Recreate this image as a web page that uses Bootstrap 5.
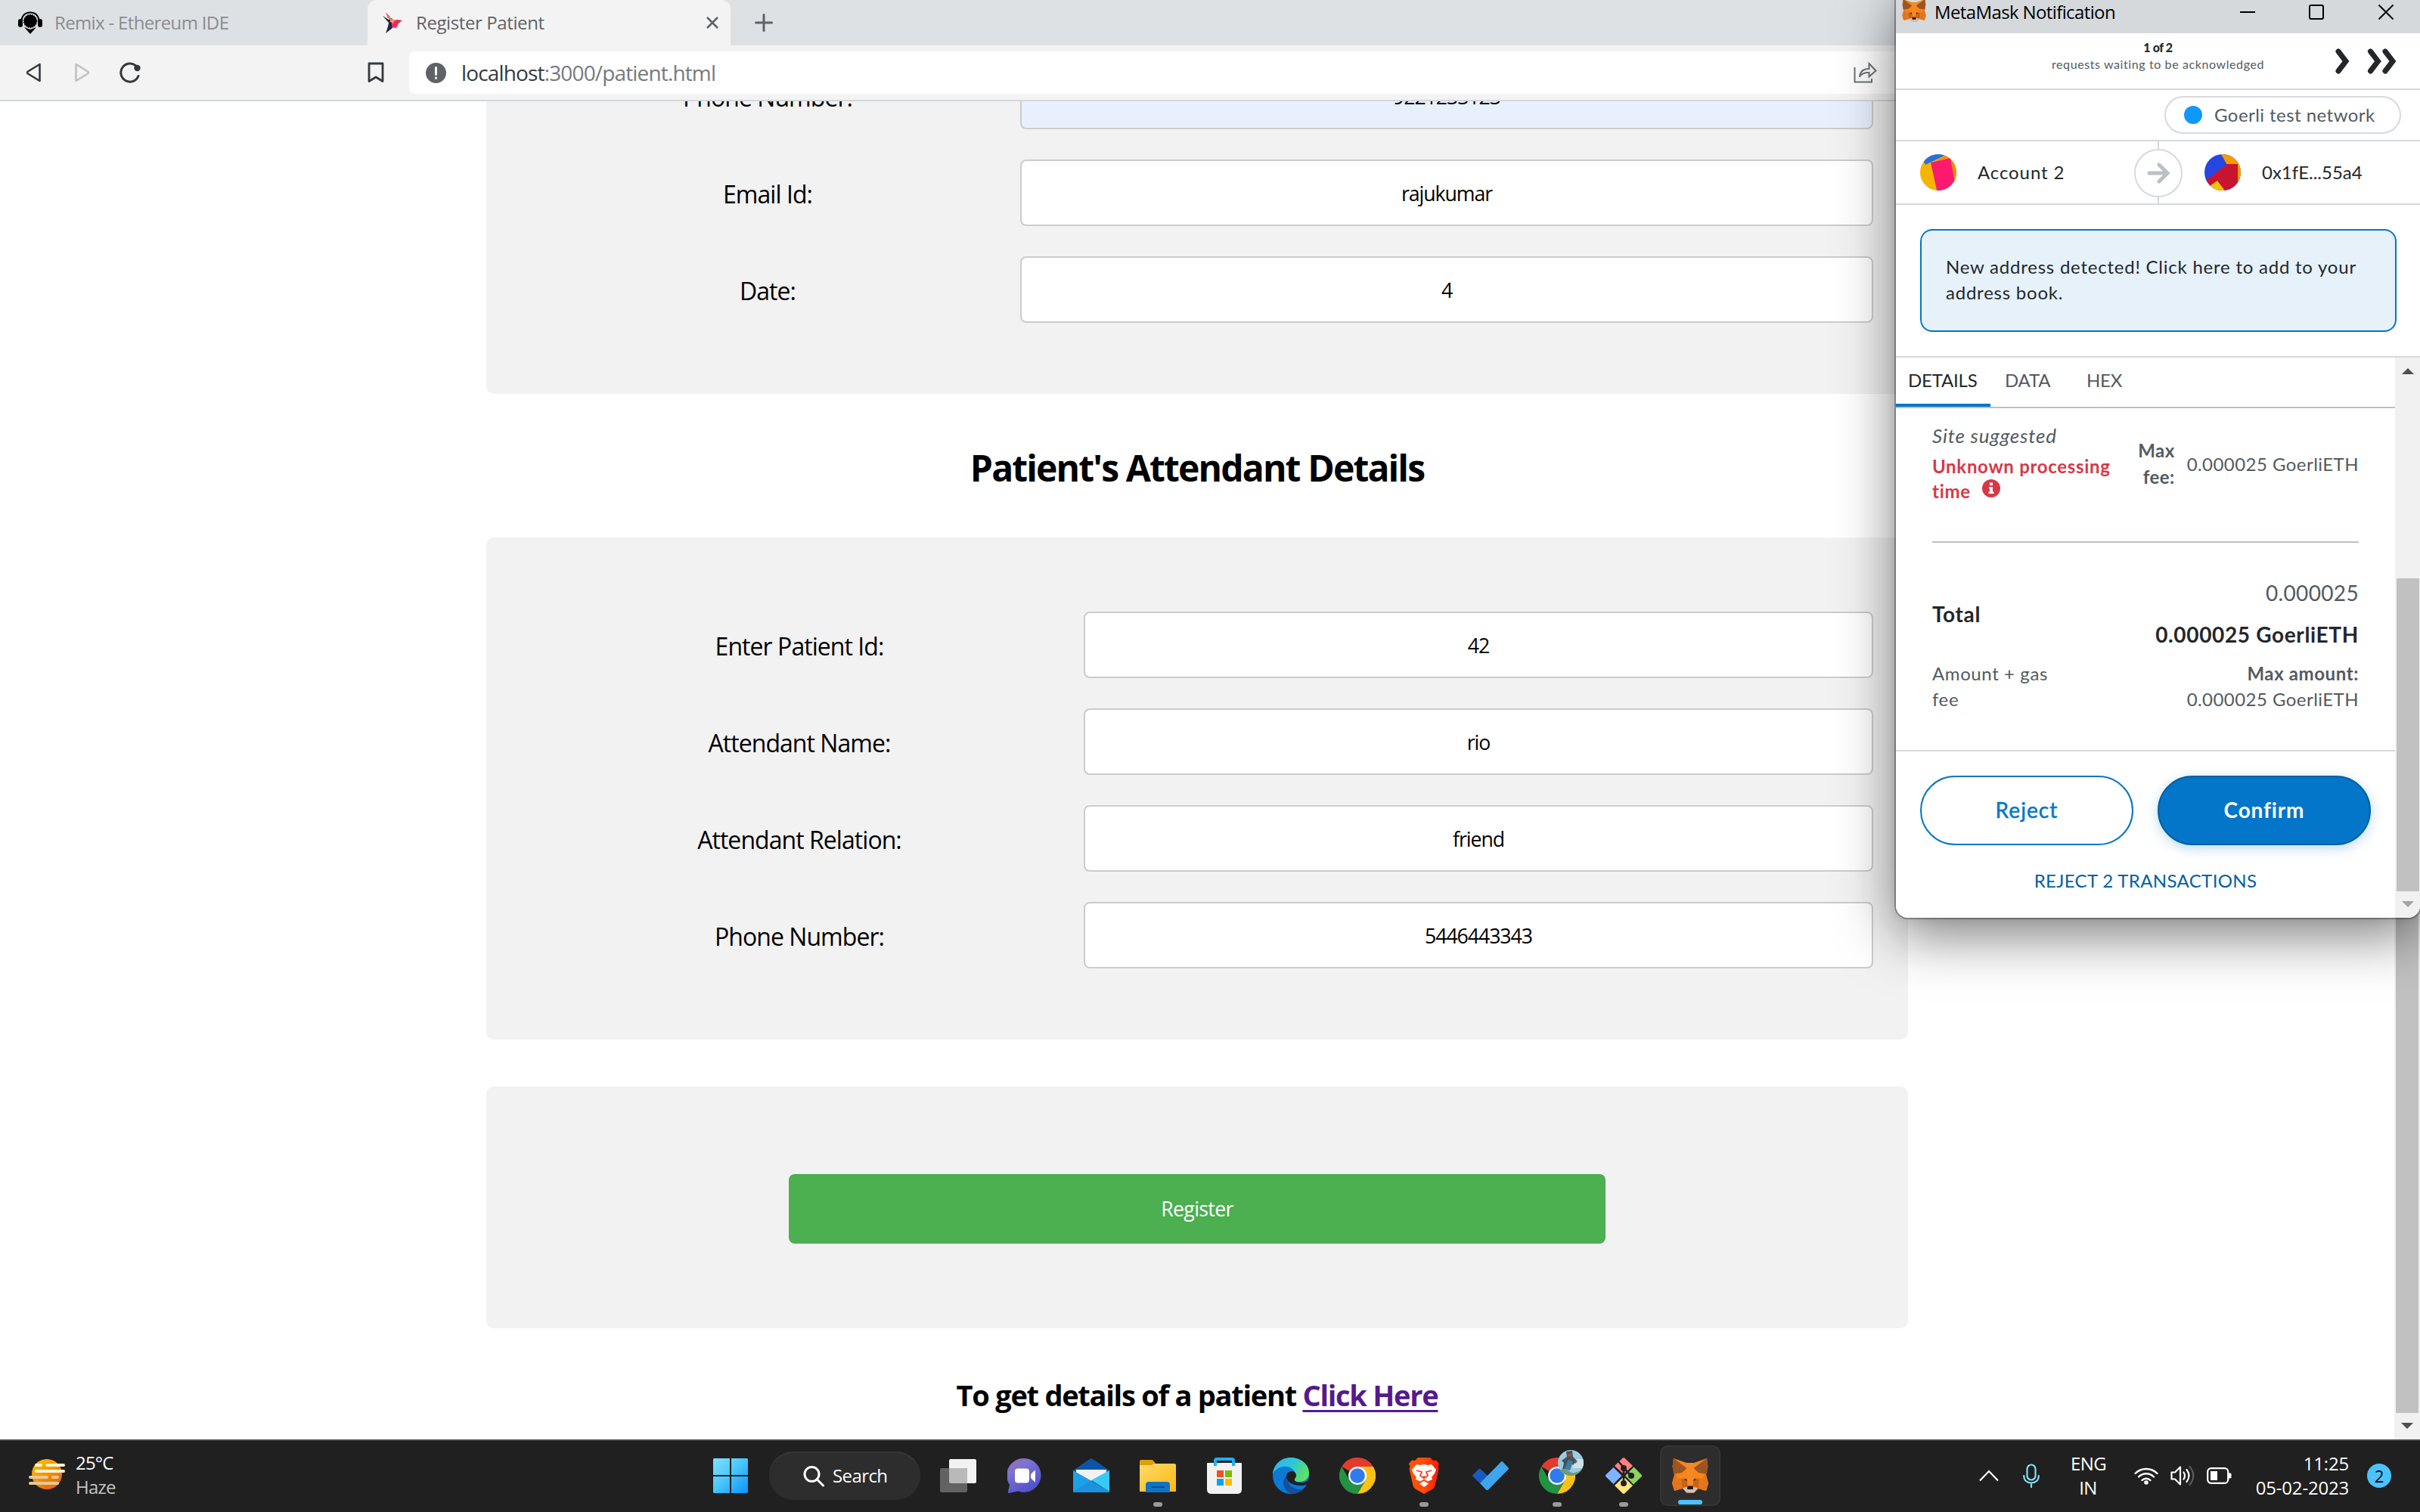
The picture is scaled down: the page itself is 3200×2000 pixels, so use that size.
<!DOCTYPE html>
<html lang="en">
<head>
<meta charset="utf-8">
<title>Register Patient</title>
<link href="https://cdn.jsdelivr.net/npm/bootstrap@5.3.0/dist/css/bootstrap.min.css" rel="stylesheet">
<script src="https://cdn.jsdelivr.net/npm/bootstrap@5.3.0/dist/js/bootstrap.bundle.min.js"></script>
<style>
  body { margin: 0; background: #fff; color: #000; font-family: "Open Sans", "Noto Sans", sans-serif; font-size: 24px; line-height: 32px; }
  svg { display: block; flex: none; }
  .desktop { width: 3200px; height: 2000px; }

  /* browser chrome */
  .tabstrip { height: 60px; background: #dde1e4; flex: none; }
  .tab-idle { width: 486px; padding-left: 24px; gap: 16px; color: #8a8d91; letter-spacing: -.65px; }
  .tab-live { width: 480px; padding: 0 16px 0 20px; background: #f3f3f3; color: #5f6368; border-radius: 12px 12px 0 0; letter-spacing: -.4px; }
  .tab-live .tab-name { margin-left: 18px; }
  .tab-plus { margin-left: 32px; }
  .toolbar { height: 74px; background: #f3f3f3; border-bottom: 2px solid #d3d8dc; flex: none; padding-left: 34px; }
  .bar-forward { margin-left: 43px; }
  .bar-reload { margin-left: 39px; }
  .bar-save { margin-left: 299px; }
  .address { height: 56px; width: 1990px; margin-left: 33px; padding: 0 48px 0 22px; background: #fff; border-radius: 8px; font-size: 28px; letter-spacing: -.85px; color: #767a7e; }
  .address b { font-weight: 400; color: #35393d; }

  /* patient page */
  .page { width: 1880px; margin-left: 643px; flex: none; }
  .panel { background: #f2f2f2; border-radius: 10px; padding: 0 46px 0 38px; }
  .panel-first { margin-top: -51px; height: 438px; }
  .panel-second { margin-top: 60px; height: 664px; padding-top: 98px; }
  .panel-third { margin-top: 62px; height: 320px; padding: 4px 0 0; }
  .field { height: 88px; margin-bottom: 40px; font-size: 32px; letter-spacing: -.95px; }
  .field label { width: 668px; padding-top: 3px; text-align: center; }
  .panel-second .field label { width: 752px; }
  .field input { flex: 1; min-width: 0; height: 88px; border: 2px solid #ccc; border-radius: 8px; background: #fff; text-align: center; font-size: 26.67px; letter-spacing: -1.05px; color: #000; padding: 0; }
  .field input.autofilled { background: #e8f0fe; }
  .section-title { font-size: 48px; line-height: 64px; font-weight: 700; letter-spacing: -1.85px; margin: 66px 0 0; text-align: center; }
  .register { width: 1080px; height: 92px; background: #4caf50; color: #fff; border: 0; border-radius: 8px; font-size: 26.67px; letter-spacing: -.65px; }
  .lookup { font-size: 38px; line-height: 50px; font-weight: 700; letter-spacing: -1.27px; margin: 63px 0 0; text-align: center; }
  .lookup a { color: #551a8b; text-decoration-thickness: 3px; text-underline-offset: 5px; }

  /* scrollbars */
  .rail { width: 34px; background: #f1f1f1; flex: none; }
  .rail .thumb { width: 30px; background: #c1c1c1; margin: 0 auto; }
  .page-thumb { height: 1100px; }
  .page-down { margin: 13px 0 14px; }

  /* wallet window */
  .wallet, .wallet-shade { left: 2507px; top: -16px; width: 693px; height: 1230px; border-radius: 16px; }
  .wallet { padding-top: 16px; background: #fff; overflow: hidden; font-family: Lato, "Open Sans", sans-serif; color: #24272a; letter-spacing: .6px; z-index: 2; }
  .wallet .rail { width: 33px; }
  .wallet-shade { box-shadow: 0 0 0 2px rgba(0,0,0,.28), 0 22px 74px rgba(0,0,0,.52), 0 0 12px rgba(0,0,0,.12); z-index: 1; }
  .w-title { margin-top: -16px; padding: 16px 0 0 8px; height: 60px; background: #d5d9dc; color: #000; font-family: "Open Sans", sans-serif; letter-spacing: -.62px; }
  .w-title .cap { height: 32px; margin-bottom: 12px; }
  .w-title .cap-name { margin-left: 11px; }
  .w-title .cap-fox { margin-bottom: 4px; }
  .w-title .cap-max { margin-left: 71px; }
  .w-title .cap-close { margin: 0 35px 0 72px; }
  .line-b { border-bottom: 2px solid #d6d9dc; }
  .w-queue { height: 75px; font-size: 16px; line-height: 22px; }
  .w-queue .words { padding-bottom: 13px; }
  .w-queue .note { letter-spacing: .6px; color: #535a61; }
  .w-queue .count { letter-spacing: -.4px; font-weight: 900; }
  .w-queue .side { width: 113px; }
  .w-net { height: 68px; padding-right: 25px; }
  .net-pill { width: 313px; height: 50px; border: 2px solid #d6d9dc; border-radius: 25px; color: #535a61; padding-left: 24px; gap: 16px; letter-spacing: .45px; }
  .net-dot { width: 24px; height: 24px; border-radius: 50%; background: #1098fc; }
  .w-parties { height: 84px; padding-left: 32px; }
  .w-parties .from { width: 283px; gap: 28px; letter-spacing: .9px; }
  .w-parties .to { margin-left: 29px; gap: 28px; letter-spacing: 0; }
  .w-parties .mid { width: 64px; height: 82px; }
  .w-notice { height: 202px; padding: 32px 31px 0 32px; }
  .notice-box { height: 136px; border: 2px solid #0376c9; border-radius: 16px; background: #e6f1f9; padding: 31px 20px 0 32px; line-height: 33.6px; letter-spacing: .77px; }
  .w-tabs { height: 67px; border-bottom: 2px solid #bbc0c5; color: #535a61; letter-spacing: -.2px; }
  .w-tabs span { height: 67px; padding: 14px 0 0 19px; width: 108px; }
  .w-tabs .on { width: 125px; padding-left: 16px; color: #24272a; border-bottom: 4px solid #0376c9; height: 65px; }
  .w-body { padding: 0 48px; color: #535a61; height: 452px; }
  .fee-row { height: 178px; border-bottom: 2px solid #bbc0c5; padding-top: 20px; }
  .site { font-style: italic; font-size: 26px; letter-spacing: .8px; }
  .warn { color: #d73847; font-weight: 700; line-height: 33px; margin-top: 8px; letter-spacing: .7px; }
  .warn svg { margin: 1px 0 0 15px; }
  .max-fee { height: 70px; margin-top: 18px; gap: 16px; line-height: 35px; letter-spacing: .45px; }
  .total-row { padding-top: 46px; }
  .total-name { margin-top: 28px; }
  .total-eth { margin-top: 15px; }
  .gas-row { margin-top: 15px; line-height: 34px; }
  .gas-row span { letter-spacing: .45px; }
  .big { font-size: 28px; line-height: 40px; letter-spacing: .35px; }
  .ink { color: #24272a; font-weight: 700; letter-spacing: .65px; }
  .w-foot { border-top: 2px solid #d6d9dc; padding: 32px 32px 0; }
  .pill { height: 92px; width: 282px; border-radius: 46px; font-size: 28px; border: 2px solid #0376c9; padding-bottom: 4px; }
  .pill-line { color: #0376c9; background: #fff; letter-spacing: 1.1px; -webkit-text-stroke: .5px #0376c9; }
  .pill-fill { color: #fff; background: #0376c9; border-color: #0260a4; font-weight: 700; letter-spacing: .85px; box-shadow: 0 4px 16px rgba(3,118,201,.28); }
  .reject-all { color: #0260a4; text-align: center; margin-top: 31px; letter-spacing: .35px; }
  .w-up { margin-top: 14px; }
  .w-thumb { margin-top: 270px !important; height: 414px; }
  .w-down { margin-top: 13px; }

  /* taskbar */
  .taskbar { height: 96px; background: #202020; box-shadow: inset 0 2px #444; color: #fff; flex: none; }
  .weather { width: 926px; padding-left: 37px; gap: 13px; letter-spacing: -.8px; }
  .weather .now { padding-bottom: 2px; }
  .weather .sky { color: #c3c3c3; }
  .tile { width: 80px; height: 80px; border-radius: 10px; margin-right: 8px; flex: none; }
  .tile.front { background: #2d2d2d; border: 2px solid #343434; }
  .tile .run { bottom: -1px; left: 50%; width: 12px; height: 6px; border-radius: 3px; background: #9a9a9a; transform: translateX(-50%); }
  .tile .run.active { width: 32px; background: #4cc2ff; bottom: 0; }
  .tile .face { left: 41px; top: 6px; }
  .search-pill { width: 200px; height: 64px; border-radius: 32px; background: #2d2d2d; box-shadow: inset 0 2px #363636; margin: 0 10px 0 3px; gap: 10px; padding-left: 45px; letter-spacing: -.6px; }
  .tray { margin-left: 342px; }
  .tray .mic { margin-left: 32px; }
  .lang { width: 46px; margin: 0 38px 0 41px; text-align: center; letter-spacing: -.6px; padding-bottom: 1px; }
  .clock { width: 125px; margin: 0 24px 0 30px; text-align: right; letter-spacing: -.2px; padding-bottom: 1px; }
  .alerts { width: 32px; height: 32px; border-radius: 50%; background: #4cc2ff; color: #000; font-size: 22px; text-align: center; }
</style>
</head>
<body>
<svg width="0" height="0" class="position-absolute">
  <defs>
    <symbol id="fox" viewBox="0 0 48 46">
      <path fill="#f6851b" d="M2 0 19 6h10L46 0l1.500 11-3 9 3.500 13-3 10-10-3-6 5.500h-9L13.500 40 3 43 0 33l3.500-13L.500 11z"/>
      <path fill="#e2761b" d="M3.500 20 0 33h13l6-8zM44.500 20 48 33H35l-6-8z"/>
      <path fill="#f6851b" d="M3.500 20 19 14v12L8 27zM44.500 20 29 14v12l11 1z"/>
      <path fill="#e4751f" d="M0 33h13l.5 7L3 43zM48 33H35l-.5 7L45 43z"/>
      <path fill="#f58a25" d="m19 6 10 0-2 32h-6z"/>
      <path fill="#9c5423" d="M2 0 19.500 13 13 19 2 21 .500 11zM46 0 28.500 13 35 19l11 2 1.500-10z"/>
      <path fill="#cd6116" d="m12 27 8 4 .5 6-7 3zM36 27l-8 4-.5 6 7 3z"/>
      <path fill="#233447" d="m15 28 4-1 1 3.500zM33 28l-4-1-1 3.500z"/>
      <path fill="#d7c1b3" d="m14 39 7-1h6l7 1-5 6.500h-10z"/>
      <path fill="#161616" d="M20.500 36.500h7L28 41h-8z"/>
    </symbol>
    <symbol id="chrome" viewBox="0 0 48 48">
      <path fill="#e33b2e" d="M24 24 3.200 12A24 24 0 0 1 44.800 12z"/>
      <path fill="#fbc116" d="M24 12h20.800A24 24 0 0 1 24 48l10.400-18z"/>
      <path fill="#229342" d="M3.200 12 13.600 30A12 12 0 0 0 34.400 30L24 48A24 24 0 0 1 3.200 12z"/>
      <circle cx="24" cy="24" r="12" fill="#fff"/><circle cx="24" cy="24" r="9.800" fill="#2f7bee"/>
    </symbol>
  </defs>
</svg>

<div class="desktop d-flex flex-column position-relative overflow-hidden">

  <div class="tabstrip d-flex">
    <div class="tab-idle d-flex align-items-center">
      <svg width="32" height="30" viewBox="0 0 32 30"><path fill="none" stroke="#000" stroke-width="2.200" d="M4.500 15C4 6 9 1.500 16 1.500S28 6 27.500 15"/><rect y="10" width="6" height="11" rx="3"/><rect x="26" y="10" width="6" height="11" rx="3"/><circle cx="16" cy="13" r="8.500"/><circle cx="16" cy="13" r="8.500" fill="none" stroke="#000" stroke-width="1.500" stroke-dasharray="1.500 1.500"/><path d="m8 21 8 3 8-3-8 9z"/></svg>
      <span>Remix - Ethereum IDE</span>
    </div>
    <div class="tab-live d-flex align-items-center">
      <svg width="26" height="28" viewBox="0 0 26 28"><path fill="#23234c" d="m0 5 8 5 4-2 5 7-4 6-9 7 3-9 1-5z"/><path fill="#e07a4c" d="m4 0 6 6 1 5-5-4z"/><path fill="#ee2c5b" d="m12 12 7-2 7 1-5 4-3 6-6-1z"/><path fill="#f3976b" d="m10 9 6 1-2 5-4-2z"/></svg>
      <span class="tab-name">Register Patient</span>
      <svg class="ms-auto" width="16" height="16" viewBox="0 0 16 16" stroke="#5f6368" stroke-width="2.600"><path d="m1 1 14 14M15 1 1 15"/></svg>
    </div>
    <div class="tab-plus d-flex align-items-center"><svg width="24" height="24" viewBox="0 0 24 24" stroke="#5f6368" stroke-width="3" stroke-linecap="round"><path d="M12 1.500v21M1.500 12h21"/></svg></div>
  </div>

  <div class="toolbar d-flex align-items-center">
    <svg width="21" height="28" viewBox="0 0 21 28" fill="none" stroke="#35393d" stroke-width="2.600" stroke-linejoin="round"><path d="M18.500 3v22L3 15.500q-2-1.500 0-3z"/></svg>
    <svg class="bar-forward" width="21" height="28" viewBox="0 0 21 28" fill="none" stroke="#bfc1c3" stroke-width="2.600" stroke-linejoin="round"><path d="M2.500 3v22L18 15.500q2-1.500 0-3z"/></svg>
    <svg class="bar-reload" width="29" height="28" viewBox="0 0 29 28" fill="none" stroke="#35393d" stroke-width="3" stroke-linecap="round"><path d="M25 18.500A12 12 0 1 1 21 4.500"/><circle cx="23.500" cy="8" r="4.200" fill="#35393d" stroke="none"/></svg>
    <svg class="bar-save" width="22" height="28" viewBox="0 0 22 28" fill="none" stroke="#35393d" stroke-width="2.800" stroke-linejoin="round"><path d="M2 2h18v23.500L11 20l-9 5.500z"/></svg>
    <div class="address d-flex align-items-center">
      <svg width="27" height="27" viewBox="0 0 27 27"><circle cx="13.500" cy="13.500" r="13.500" fill="#5f6368"/><path stroke="#fff" stroke-width="3" stroke-linecap="round" d="M13.500 6.500v9M13.500 20v.2"/></svg>
      <span class="ms-3 ps-1"><b>localhost</b>:3000/patient.html</span>
      <svg class="ms-auto" width="32" height="28" viewBox="0 0 32 28" fill="none" stroke="#6f7377" stroke-width="2"><path d="M1.500 7v19.500H24V22M8 19.500Q9 9 20.500 9V2l9 9.500-9 8V14Q12 13.500 8 19.500z"/></svg>
    </div>
  </div>

  <div class="d-flex flex-grow-1 overflow-hidden justify-content-between">
    <main class="page">
      <div class="panel panel-first">
        <div class="field d-flex align-items-center"><label>Phone Number:</label><input class="autofilled" value="9221233123"></div>
        <div class="field d-flex align-items-center"><label>Email Id:</label><input value="rajukumar"></div>
        <div class="field d-flex align-items-center"><label>Date:</label><input value="4"></div>
      </div>
      <h2 class="section-title">Patient's Attendant Details</h2>
      <div class="panel panel-second">
        <div class="field d-flex align-items-center"><label>Enter Patient Id:</label><input value="42"></div>
        <div class="field d-flex align-items-center"><label>Attendant Name:</label><input value="rio"></div>
        <div class="field d-flex align-items-center"><label>Attendant Relation:</label><input value="friend"></div>
        <div class="field d-flex align-items-center"><label>Phone Number:</label><input value="5446443343"></div>
      </div>
      <div class="panel panel-third d-flex align-items-center justify-content-center"><button class="register">Register</button></div>
      <h3 class="lookup">To get details of a patient <a href="#">Click Here</a></h3>
    </main>
    <div class="rail d-flex flex-column justify-content-end">
      <div class="thumb page-thumb"></div>
      <svg class="mx-auto page-down" width="16" height="8" viewBox="0 0 16 8"><path fill="#505050" d="M0 0h16L8 8z"/></svg>
    </div>
  </div>

  <div class="taskbar d-flex align-items-center">
    <div class="weather d-flex align-items-center">
      <svg width="50" height="44" viewBox="0 0 50 44"><defs><linearGradient id="sun" x1="0" y1="0" x2=".7" y2="1"><stop offset="0" stop-color="#ffcb05"/><stop offset="1" stop-color="#ea6408"/></linearGradient></defs><circle cx="25" cy="20" r="20" fill="url(#sun)"/><g stroke-width="4" stroke-linecap="round"><path stroke="#fff3d0" d="M11 8h6M25 8h22M11 16h36"/><path stroke="#e6cb95" d="M3 24h22M33 24h6M3 32h36"/></g></svg>
      <div class="now"><div>25°C</div><div class="sky">Haze</div></div>
    </div>
    <div class="tile d-flex align-items-center justify-content-center">
      <svg width="46" height="46" viewBox="0 0 46 46"><defs><linearGradient id="win" x1="0" y1="0" x2="1" y2="1"><stop offset="0" stop-color="#83e0ff"/><stop offset=".45" stop-color="#4cc8fb"/><stop offset="1" stop-color="#0a93fb"/></linearGradient></defs><path fill="url(#win)" d="M1 0h21v22H0V1zM24 0h21l1 1v21H24zM0 24h22v22H1l-1-1zM24 24h22v21l-1 1H24z"/></svg>
    </div>
    <div class="search-pill d-flex align-items-center">
      <svg width="29" height="29" viewBox="0 0 29 29" fill="none" stroke="#fff" stroke-width="3" stroke-linecap="round"><circle cx="11.500" cy="12" r="9.500"/><path d="m18.500 19 8 8"/></svg>
      <span>Search</span>
    </div>
    <div class="tile d-flex align-items-center justify-content-center">
      <svg width="48" height="44" viewBox="0 0 48 44"><rect x="12" width="36" height="32" rx="2" fill="#f2f2f2"/><rect y="12" width="36" height="32" rx="2" fill="#626262"/><path fill="#b9b9b9" d="M12 12h22q2 0 2 2v18H14q-2 0-2-2z"/></svg>
    </div>
    <div class="tile d-flex align-items-center justify-content-center">
      <svg width="46" height="46" viewBox="0 0 46 46"><defs><linearGradient id="chat" x1="0" y1="0" x2=".6" y2="1"><stop offset="0" stop-color="#a56ba9"/><stop offset=".35" stop-color="#7c74d2"/><stop offset="1" stop-color="#4f50c8"/></linearGradient></defs><path fill="url(#chat)" d="M23 0a22.500 22.500 0 1 1-9 43.500L2 46q-1.500 0-1-2l2-9A22.500 22.500 0 0 1 23 0z"/><rect x="10" y="13.500" width="19" height="19" rx="4" fill="#fff"/><path fill="#fff" d="M31 21l5-5q1-.5 1 1v13q0 1.500-1 1l-5-5z"/></svg>
    </div>
    <div class="tile d-flex align-items-center justify-content-center">
      <svg width="48" height="46" viewBox="0 0 48 46"><path fill="#0a56a6" d="M0 16 22 1q2-1.500 4 0l22 15v6H0z"/><path fill="#f1f1f1" d="M4 15h40v4L24 30 4 19z"/><path fill="#1ea0e6" d="M0 16 48 44q0 1-1 1H1q-1 0-1-1z"/><path fill="#39c9f5" d="M48 16 24 29l24 15z"/><path fill="#1588dc" d="m24 29 24 15q0 1-1 1H1q-1 0-1-1z" opacity=".6"/></svg>
    </div>
    <div class="tile d-flex align-items-center justify-content-center position-relative">
      <svg width="48" height="44" viewBox="0 0 48 44"><defs><linearGradient id="dir" x1="0" y1="0" x2="1" y2="1"><stop offset="0" stop-color="#ffdb6b"/><stop offset="1" stop-color="#fdb813"/></linearGradient></defs><path fill="#e09e06" d="M0 3q0-2 2-2h13q2 0 3 1l3 4v4H0z"/><path fill="url(#dir)" d="M0 8h16l3-2h27q2 0 2 2v35H0z"/><path fill="#1173c8" d="M8 44V34q0-4 4-4h24q4 0 4 4v10z"/><path stroke="#0b4f94" stroke-width="2" d="M15 37h18"/></svg>
      <span class="run position-absolute"></span>
    </div>
    <div class="tile d-flex align-items-center justify-content-center">
      <svg width="46" height="48" viewBox="0 0 46 48"><path fill="#f2f2f2" d="M0 8q0-1 1-1h44q1 0 1 1v34q0 6-6 6H6q-6 0-6-6z"/><path fill="none" stroke="#1fb0f5" stroke-width="4" d="M11 11V4q0-2 2-2h20q2 0 2 2v7"/><path fill="#f25022" d="M13 17h9v9h-9z"/><path fill="#7fba00" d="M24 17h9v9h-9z"/><path fill="#00a4ef" d="M13 28h9v9h-9z"/><path fill="#ffb900" d="M24 28h9v9h-9z"/></svg>
    </div>
    <div class="tile d-flex align-items-center justify-content-center">
      <svg width="48" height="48" viewBox="0 0 48 48"><defs><linearGradient id="ea" x1="0" y1=".2" x2="1" y2=".6"><stop offset="0" stop-color="#2fb5ee"/><stop offset=".5" stop-color="#2fc6d4"/><stop offset="1" stop-color="#62e45b"/></linearGradient></defs><circle cx="24" cy="24" r="24" fill="#0c79d4"/><path fill="url(#ea)" d="M0 22C1 9 11 0 24 0s24 9 24 20c0 8-6 12-13 12-5 0-7-1-7-3 0-1 2-2 2-5C30 15 21 11 14 12 7 13 2 17 0 22z"/><path fill="#124f9c" d="M18 24c0 10 8 18 17 18 4 0 8-2 10-6a24 24 0 0 1-18 12c-8-1-13-8-13-15 0-4 2-7 4-9z"/><path fill="#202020" d="M18 25c0-5 4-7 8-7 3 0 5 3 5 6s-3 4-2 6c1 3 6 3 9 3 5 0 8-2 10-5l1 9-5-1c-3 1-5 1-7 1-10 0-19-4-19-12z"/></svg>
    </div>
    <div class="tile d-flex align-items-center justify-content-center"><svg width="48" height="48"><use href="#chrome"/></svg></div>
    <div class="tile d-flex align-items-center justify-content-center position-relative">
      <svg width="40" height="48" viewBox="0 0 40 48"><defs><linearGradient id="lion"><stop offset="0" stop-color="#ff5601"/><stop offset=".5" stop-color="#ff4a0c"/><stop offset="1" stop-color="#ff1a00"/></linearGradient></defs><path fill="url(#lion)" d="M12 0h16l4 4 4-.5L40 8l-1.500 4 1 3-5 22q-1 3-3 4.500L20 48 8.500 41.500q-2-1.500-3-4.500L.500 15l1-3L0 8l4-4.500L8 4z"/><path fill="#fff" d="M10 9l5 1 5-1 5 1 5-1 6 7-2 5-4 5 1 3-6 2.500-5-3-5 3L9 29l1-3-4-5-2-5zM20 31l6 3.500-6 4.500-6-4.500z"/><path fill="none" stroke="#f43f10" stroke-width="1.800" d="M10 17l7 2-2 5 5 3.500 5-3.500-2-5 7-2M20 24v4"/></svg>
      <span class="run position-absolute"></span>
    </div>
    <div class="tile d-flex align-items-center justify-content-center">
      <svg width="48" height="38" viewBox="0 0 48 38"><path fill="#185abd" d="m.500 18 8-8q1-1 2 0L21 20 11 30 .500 20q-1-1 0-2z"/><path fill="#41a5ee" d="M38 .500q1-1 2 0l7.500 8q1 1 0 2L21 37.500q-1.500 1.500-3 0L10 29z"/></svg>
    </div>
    <div class="tile d-flex align-items-center justify-content-center position-relative">
      <svg width="48" height="48"><use href="#chrome"/></svg>
      <svg class="position-absolute face" width="34" height="34" viewBox="0 0 34 34"><defs><clipPath id="pic"><circle cx="17" cy="17" r="17"/></clipPath></defs><g clip-path="url(#pic)"><path fill="#9ccbe0" d="M0 0h34v34H0z"/><path fill="#c9e2e6" d="M20 12h14v12H20z"/><path fill="#3d5560" d="m11 2 8-1 1 8 5 5-5 6-2-3-3 6-9 3 2-9-3-3 7-5z"/><path fill="#a84535" d="m13 5 5 0 0 3-5 1zM22 13l4 2-3 3z"/><path fill="#47799b" d="m14 13 6 2-4 12-7-2z"/><path fill="#6c9b7b" d="M0 28q9-6 15 0t19-4v10H0z"/></g></svg>
      <span class="run position-absolute"></span>
    </div>
    <div class="tile d-flex align-items-center justify-content-center position-relative">
      <svg width="48" height="48" viewBox="0 0 48 48"><path fill="#80b3ff" d="m10.500 13 11 11-11 11L.700 25.500q-1.400-1.500 0-3z"/><path fill="#ff8080" d="m12 11 10.500-10.300q1.500-1.400 3 0L36 11 24 22z"/><path fill="#8dd35f" d="m37.500 12.500 9.800 10q1.400 1.500 0 3L37 35.500 26 24z"/><path fill="#ffe680" d="M24 25.500 36 37 25.500 47.300q-1.500 1.400-3 0L12 37z"/><path fill="none" stroke="#202020" stroke-width="2.600" d="m16 4 8 9v21M24 14l10 10"/><g fill="#202020"><circle cx="24" cy="14" r="4"/><circle cx="34" cy="24" r="4"/><circle cx="24" cy="34" r="4"/></g></svg>
      <span class="run position-absolute"></span>
    </div>
    <div class="tile front d-flex align-items-center justify-content-center position-relative me-0">
      <svg width="48" height="46"><use href="#fox"/></svg>
      <span class="run active position-absolute"></span>
    </div>
    <div class="tray d-flex align-items-center">
      <svg width="26" height="16" viewBox="0 0 26 16" fill="none" stroke="#fff" stroke-width="2.200"><path d="M1 14.500 13 2l12 12.500"/></svg>
      <svg class="mic" width="22" height="32" viewBox="0 0 22 32" fill="none" stroke="#7fe0f7" stroke-width="2.200" stroke-linecap="round"><rect x="5.500" y="1.500" width="11" height="20" rx="5.500"/><path d="M1.200 16c0 6 4 9.500 9.800 9.500s9.800-3.500 9.800-9.500M11 26v5"/></svg>
      <div class="lang"><div>ENG</div><div>IN</div></div>
      <svg width="32" height="24" viewBox="0 0 32 24" fill="none" stroke="#fff" stroke-width="2.400" stroke-linecap="round"><path d="M1.500 9a20.500 20.500 0 0 1 29 0M6 13.500a14 14 0 0 1 20 0M10.500 18a7.800 7.800 0 0 1 11 0"/><circle cx="16" cy="21" r="2.800" fill="#fff" stroke="none"/></svg>
      <svg class="ms-3" width="32" height="28" viewBox="0 0 32 28" fill="none" stroke="#fff" stroke-width="2.200" stroke-linecap="round" stroke-linejoin="round"><path d="M1.500 9.500H6l7-7v23l-7-7H1.500zM17.500 9.500q3 4.500 0 9M21.500 6q6 8 0 16"/><path stroke="#5a5a5a" d="M25.500 2q9.500 12 0 24"/></svg>
      <svg class="ms-3" width="33" height="22" viewBox="0 0 33 22" fill="none" stroke="#fff" stroke-width="2.200"><rect x="1.200" y="1.200" width="27" height="19.600" rx="4.500"/><path fill="#fff" stroke="none" d="M5 5h9v12H5zM29 7.500h2.500l1 1v5l-1 1H29z"/></svg>
      <div class="clock"><div>11:25</div><div>05-02-2023</div></div>
      <div class="alerts">2</div>
    </div>
  </div>

  <div class="wallet-shade position-absolute"></div>
  <section class="wallet position-absolute d-flex flex-column">
    <div class="w-title d-flex align-items-center flex-shrink-0">
      <div class="cap d-flex align-items-center w-100">
        <svg class="cap-fox" width="32" height="30"><use href="#fox"/></svg>
        <span class="cap-name">MetaMask Notification</span>
        <svg class="ms-auto" width="20" height="20" stroke="#000" stroke-width="2"><path d="M0 10h20"/></svg>
        <svg class="cap-max" width="20" height="20" fill="none" stroke="#000" stroke-width="2"><rect x="1" y="1" width="18" height="18" rx="2"/></svg>
        <svg class="cap-close" width="20" height="20" stroke="#000" stroke-width="2"><path d="m.500.500 19 19M19.500.500l-19 19"/></svg>
      </div>
    </div>
    <div class="w-queue line-b d-flex align-items-center justify-content-between flex-shrink-0">
      <div class="side"></div>
      <div class="words text-center"><div class="count">1 of 2</div><div class="note">requests waiting to be acknowledged</div></div>
      <div class="side d-flex">
        <svg width="86" height="36" viewBox="0 0 86 36" fill="none" stroke="#24272a" stroke-width="7" stroke-linecap="round" stroke-linejoin="miter"><path d="m5 5 10 13L5 31M47.500 5l10 13-10 13M67 5l10 13-10 13"/></svg>
      </div>
    </div>
    <div class="w-net line-b d-flex align-items-center justify-content-end flex-shrink-0">
      <div class="net-pill d-flex align-items-center"><span class="net-dot"></span><span>Goerli test network</span></div>
    </div>
    <div class="w-parties line-b d-flex align-items-center flex-shrink-0">
      <div class="from d-flex align-items-center">
        <svg width="48" height="48" viewBox="0 0 48 48"><defs><clipPath id="rd"><circle cx="24" cy="24" r="24"/></clipPath></defs><g clip-path="url(#rd)"><path fill="#f5b400" d="M0 0h48v48H0z"/><path fill="#2771df" d="M0 0h36L7 14z"/><path fill="#f18a12" d="M38 0h10v48h-4L38 5 20 9z"/><path fill="#fb1a6f" d="m14 11 26-6 9 50-26-3z"/></g></svg>
        <span>Account 2</span>
      </div>
      <div class="mid"><svg width="64" height="82" viewBox="0 0 64 82"><path stroke="#d6d9dc" stroke-width="2" d="M32 0v82"/><circle cx="32" cy="42" r="31" fill="#fff" stroke="#d6d9dc" stroke-width="2"/><path fill="none" stroke="#bbc0c5" stroke-width="5" stroke-linecap="round" d="M20 42h24M33 31l11 11-11 11"/></svg></div>
      <div class="to d-flex align-items-center">
        <svg width="48" height="48" viewBox="0 0 48 48"><g clip-path="url(#rd)"><path fill="#2546e0" d="M0 0h48v48H0z"/><path fill="#fb9800" d="M22 0h26v40h-5V14H30z"/><path fill="#c8142f" d="M30 13h14v35H0V36z"/><path fill="#f5c400" d="m17 35 12 16H4V44z"/></g></svg>
        <span>0x1fE...55a4</span>
      </div>
    </div>
    <div class="w-notice line-b flex-shrink-0"><div class="notice-box">New address detected! Click here to add to your<br>address book.</div></div>
    <div class="d-flex flex-grow-1">
      <div class="flex-grow-1">
        <div class="w-tabs d-flex"><span class="on">DETAILS</span><span>DATA</span><span>HEX</span></div>
        <div class="w-body">
          <div class="fee-row d-flex justify-content-between align-items-start">
            <div>
              <div class="site">Site suggested</div>
              <div class="warn">Unknown processing<br><span class="d-flex">time<svg width="24" height="24" viewBox="0 0 24 24"><circle cx="12" cy="12" r="12" fill="#d73847"/><path fill="#fff" d="M10 4.500h4v3.500h-4zM9 10h5v6.500h1.500V19h-7v-2.500H10v-4H9z"/></svg></span></div>
            </div>
            <div class="max-fee d-flex align-items-center text-end"><b>Max<br>fee:</b><span>0.000025 GoerliETH</span></div>
          </div>
          <div class="total-row d-flex justify-content-between">
            <div class="big ink total-name">Total</div>
            <div class="text-end"><div class="big">0.000025</div><div class="big ink total-eth">0.000025 GoerliETH</div></div>
          </div>
          <div class="gas-row d-flex justify-content-between">
            <div>Amount + gas<br>fee</div>
            <div class="text-end"><b>Max amount:</b><br><span>0.000025 GoerliETH</span></div>
          </div>
        </div>
        <div class="w-foot">
          <div class="d-flex justify-content-between"><button class="pill pill-line">Reject</button><button class="pill pill-fill">Confirm</button></div>
          <div class="reject-all">REJECT 2 TRANSACTIONS</div>
        </div>
      </div>
      <div class="rail d-flex flex-column">
        <svg class="mx-auto flex-shrink-0 w-up" width="16" height="8" viewBox="0 0 16 8"><path fill="#505050" d="M0 8h16L8 0z"/></svg>
        <div class="thumb w-thumb"></div>
        <svg class="mx-auto flex-shrink-0 w-down" width="16" height="8" viewBox="0 0 16 8"><path fill="#a3a3a3" d="M0 0h16L8 8z"/></svg>
      </div>
    </div>
  </section>
</div>
</body>
</html>
